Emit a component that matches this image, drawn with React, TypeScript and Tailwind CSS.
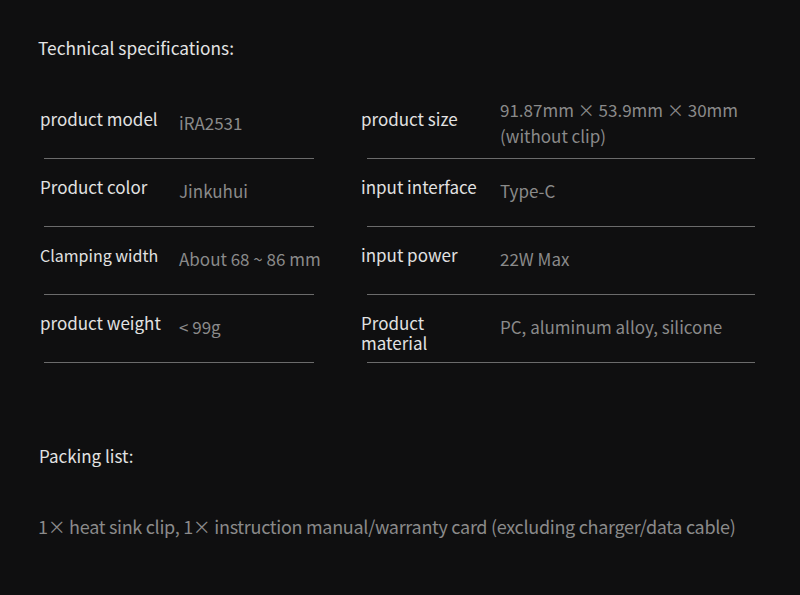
import React from "react";

const font = { fontFamily: '"Noto Sans CJK SC", "Noto Sans", sans-serif' };

type Row = { label: string; value: React.ReactNode; small?: boolean };

const left: Row[] = [
  { label: "product model", value: "iRA2531" },
  { label: "Product color", value: "Jinkuhui" },
  { label: "Clamping width", value: "About 68 ~ 86 mm", small: true },
  { label: "product weight", value: "< 99g" },
];

const right: Row[] = [
  {
    label: "product size",
    value: (
      <>
        91.87mm × 53.9mm × 30mm
        <br />
        (without clip)
      </>
    ),
  },
  { label: "input interface", value: "Type-C" },
  { label: "input power", value: "22W Max" },
  { label: "Product material", value: "PC, aluminum alloy, silicone" },
];

function Column({ rows, width, lineInset }: { rows: Row[]; width: string; lineInset: string }) {
  return (
    <div className={`flex flex-col ${width}`}>
      {rows.map((r, i) => (
        <div key={i} className="flex h-[68px] flex-col">
          <div className="mt-[16px] mb-[20px] flex h-[32px] min-h-0 items-center">
            <div
              className={`mt-[2px] w-[125px] shrink-0 self-start leading-[20px] text-[#e2e2e2] ${
                r.small ? "text-[16px]" : "text-[17px]"
              }`}
            >
              {r.label}
            </div>
            <div className="ml-[14px] whitespace-nowrap text-[17px] leading-[26px] text-[#8a8a8a]">{r.value}</div>
          </div>
          <div className={`h-px bg-[#6b6b6b] ${lineInset}`} />
        </div>
      ))}
    </div>
  );
}

export default function App() {
  return (
    <div className="h-[595px] w-[800px] overflow-hidden bg-[#0f0f10]" style={font}>
      <div className="pl-[38px] pt-[36px]">
        <div className="text-[17.3px] leading-[24px] text-[#e4e4e4]">Technical specifications:</div>
        <div className="ml-[2px] mt-[31px] flex">
          <Column rows={left} width="w-[274px]" lineInset="ml-[4px]" />
          <div className="ml-[47px]">
            <Column rows={right} width="w-[394px]" lineInset="ml-[6px]" />
          </div>
        </div>
        <div className="ml-[1px] mt-[81px] text-[17px] leading-[24px] text-[#e2e2e2]">Packing list:</div>
        <div className="mt-[46px] whitespace-nowrap text-[18px] leading-[24px] tracking-[-0.3px] text-[#8a8a8a]">
          1× heat sink clip, 1× instruction manual/warranty card (excluding charger/data cable)
        </div>
      </div>
    </div>
  );
}
